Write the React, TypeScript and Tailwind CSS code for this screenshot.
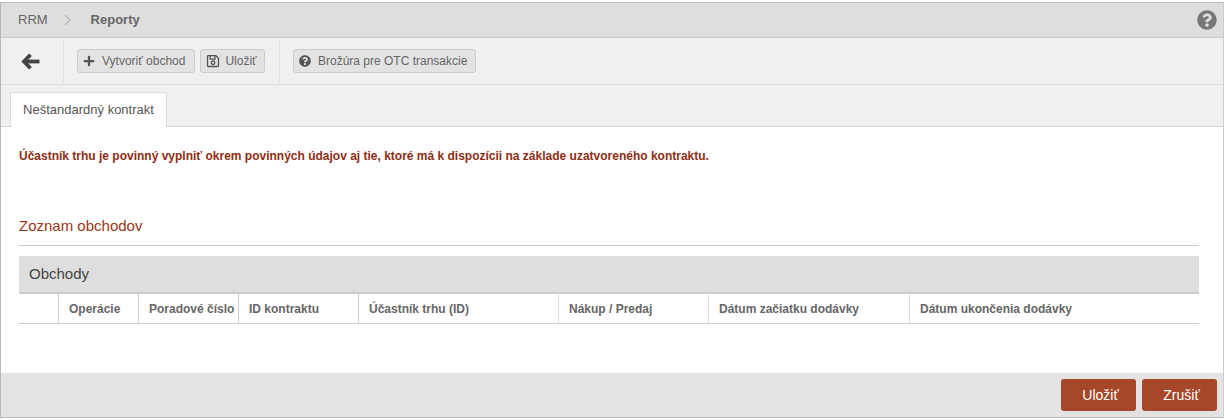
import { FaPlus, FaRegSave, FaQuestionCircle } from "react-icons/fa";

const cols: [string, string][] = [
  ["", "w-[40px]"],
  ["Operácie", "w-[80px]"],
  ["Poradové číslo", "w-[100px]"],
  ["ID kontraktu", "w-[120px]"],
  ["Účastník trhu (ID)", "w-[200px]"],
  ["Nákup / Predaj", "w-[150px]"],
  ["Dátum začiatku dodávky", "w-[201px]"],
  ["Dátum ukončenia dodávky", "flex-1"],
];

function ToolButton({ icon, label, gap, pr }: { icon: React.ReactNode; label: string; gap: string; pr: string }) {
  return (
    <button className={`h-[24px] flex items-center ${gap} ${pr} pl-[5px] rounded-[3px] border border-[#cccccc] bg-[#e3e3e3] text-[12px] text-[#666666]`}>
      <span className="text-[#555555] flex items-center">{icon}</span>
      {label}
    </button>
  );
}

export default function App() {
  return (
    <div className="h-[420px] w-[1224px] pt-[2px] pb-[2px] bg-white font-['Liberation_Sans',Arial,sans-serif]">
      <div className="h-[416px] border border-[#b8b8b8] border-r-[#cccccc] flex flex-col bg-white">
        <div className="h-[35px] shrink-0 bg-[#dedede] border-b border-[#cccccc] flex items-center pl-[17px] pr-[6px] text-[13px] text-[#666666]">
          <span>RRM</span>
          <svg width="7" height="12" viewBox="0 0 7 12" className="ml-[16px]" fill="none" stroke="#b4b4b4" strokeWidth="1.1">
            <path d="M1 1l5 5-5 5" />
          </svg>
          <span className="ml-[20px] font-bold">Reporty</span>
          <FaQuestionCircle className="ml-auto text-[#777777]" size={20} />
        </div>
        <div className="h-[47px] shrink-0 bg-[#f0f0f0] border-b border-[#dddddd] flex items-center">
          <div className="w-[63px] h-[42px] border-r border-[#dddddd] flex items-center pl-[20px]">
            <svg width="19" height="17" viewBox="0 0 19 17" fill="none" stroke="#444444" strokeWidth="3.8">
              <path d="M9.5 1.8L3 8.5l6.5 6.7" />
              <path d="M3.5 8.5H18.5" />
            </svg>
          </div>
          <div className="h-[42px] w-[216px] border-r border-[#dddddd] flex items-center gap-[5px] pl-[13px]">
            <ToolButton gap="gap-[7px]" pr="pr-[9px]" icon={<FaPlus size={12} />} label="Vytvoriť obchod" />
            <ToolButton gap="gap-[5px]" pr="pr-[7px]" icon={<FaRegSave size={14} />} label="Uložiť" />
          </div>
          <div className="pl-[13px]">
            <ToolButton gap="gap-[7px]" pr="pr-[8px]" icon={<FaQuestionCircle size={12} />} label="Brožúra pre OTC transakcie" />
          </div>
        </div>
        <div className="h-[42px] shrink-0 bg-[#f0f0f0] border-b border-[#d4d4d4] flex items-end pl-[9px]">
          <div className="h-[35px] w-[157px] bg-white border border-b-0 border-[#dddddd] flex items-center justify-center text-[13px] text-[#555555] relative top-[1px]">
            Neštandardný kontrakt
          </div>
        </div>
        <div className="flex-1 pl-[18px] pr-[24px] bg-white">
          <p className="mt-[22px] text-[12px] leading-[14px] font-bold text-[#8f2d14]">
            Účastník trhu je povinný vyplniť okrem povinných údajov aj tie, ktoré má k dispozícii na základe uzatvoreného kontraktu.
          </p>
          <h2 className="mt-[53px] h-[30px] text-[15px] leading-[20px] text-[#9c3518] border-b border-[#cccccc]">Zoznam obchodov</h2>
          <div className="mt-[10px] h-[38px] bg-[#dedede] border-b-2 border-[#cccccc] flex items-center pl-[10px] text-[15px] text-[#444444]">Obchody</div>
          <div className="h-[30px] flex border-b border-[#cccccc]">
            {cols.map(([label, w], i) => (
              <div
                key={i}
                className={`${w} h-full flex items-center text-[12px] font-bold text-[#666666] whitespace-nowrap ${i === 0 ? "" : "pl-[10px]"} ${i < 4 ? "border-r border-[#cccccc]" : i < 7 ? "border-r border-[#dddddd]" : ""}`}
              >
                {label}
              </div>
            ))}
          </div>
        </div>
        <div className="h-[44px] shrink-0 bg-[#e3e3e3] flex items-center justify-end gap-[6px] pr-[6px]">
          <button className="w-[75px] h-[32px] pl-[4px] rounded-[3px] bg-[#a6472a] text-white text-[14px]">Uložiť</button>
          <button className="w-[75px] h-[32px] pl-[4px] rounded-[3px] bg-[#a6472a] text-white text-[14px]">Zrušiť</button>
        </div>
      </div>
    </div>
  );
}
